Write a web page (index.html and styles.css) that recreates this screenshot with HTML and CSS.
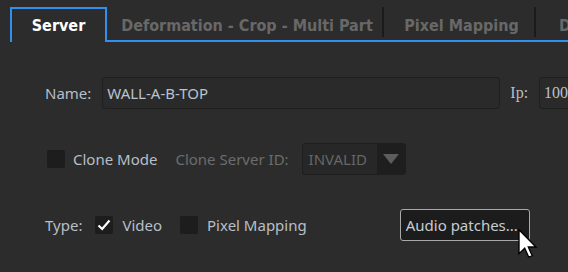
FILE: index.html
```html
<!DOCTYPE html>
<html>
<head>
<meta charset="utf-8">
<link rel="stylesheet" href="styles.css">
</head>
<body>
<div class="page">
  <nav class="tabbar">
    <div class="tab active">Server</div>
    <div class="tab-rest">
      <div class="tab t1">Deformation - Crop - Multi Part</div>
      <div class="sep"></div>
      <div class="tab t2">Pixel Mapping</div>
      <div class="sep"></div>
      <div class="tab t3">Display</div>
    </div>
  </nav>
  <main class="form">
    <div class="row">
      <span class="label">Name:</span>
      <div class="input name-input">WALL-A-B-TOP</div>
      <span class="label serif ip-label">Ip:</span>
      <div class="input ip-input serif">100.100.100.1</div>
    </div>
    <div class="row">
      <span class="check"></span>
      <span class="label clone-label">Clone Mode</span>
      <span class="label dim">Clone Server ID:</span>
      <div class="combo">
        <span class="combo-text">INVALID</span>
        <span class="combo-btn"><svg width="16" height="10" viewBox="0 0 16 10"><path d="M0 0 L16 0 L8 10 Z" fill="#5c5c5c"/></svg></span>
      </div>
    </div>
    <div class="row">
      <span class="label">Type:</span>
      <span class="check checked"><svg width="18" height="18" viewBox="0 0 18 18"><path d="M3.5 9.5 L7.2 13 L14.5 4.5" fill="none" stroke="#ffffff" stroke-width="2.2"/></svg></span>
      <span class="label opt">Video</span>
      <span class="check"></span>
      <span class="label opt">Pixel Mapping</span>
      <div class="button">Audio patches...
        <svg class="cursor" width="20" height="30" viewBox="0 0 13 20"><path d="M0.5 0.5 L0.5 16.5 L4.3 12.8 L7 18.8 L9.3 17.8 L6.7 12 L11.8 12 Z" fill="#ffffff" stroke="#000000" stroke-width="0.9" stroke-linejoin="miter"/></svg>
      </div>
    </div>
  </main>
</div>
</body>
</html>
```

FILE: styles.css
```css
html, body {
  margin: 0;
  padding: 0;
  background: #2c2c2c;
  overflow: hidden;
}
.page {
  width: 568px;
  height: 272px;
  overflow: hidden;
  font-family: "Noto Sans", "Open Sans", sans-serif;
}
.tabbar {
  display: flex;
  padding: 7px 0 0 10px;
  font-family: "DejaVu Sans Condensed", "DejaVu Sans", sans-serif;
  font-weight: bold;
  font-size: 16px;
  line-height: 19px;
  white-space: nowrap;
}
.tab {
  color: #686868;
  text-align: center;
  box-sizing: border-box;
}
.tab.active {
  color: #ffffff;
  width: 97px;
  height: 35px;
  border: 2px solid #3190ee;
  border-bottom: none;
  display: flex;
  align-items: center;
  justify-content: center;
}
.tab-rest {
  flex: 1;
  display: flex;
  height: 33px;
  border-bottom: 2px solid #3190ee;
  overflow: hidden;
}
.tab-rest .tab {
  height: 33px;
  padding-top: 9px;
  padding-left: 5px;
  flex: none;
}
.t1 { width: 275px; }
.t2 { width: 150px; }
.t3 { width: 60px; text-align: left; padding-left: 23px !important; }
.sep {
  width: 2px;
  height: 30px;
  background: #1b1b1b;
  flex: none;
}
.form {
  display: flex;
  flex-direction: column;
  gap: 34px;
  padding: 35px 0 0 45px;
}
.row {
  display: flex;
  align-items: center;
  height: 32px;
  white-space: nowrap;
}
.label {
  color: #b8bfc7;
  font-size: 15px;
}
.serif {
  font-family: "Liberation Serif", serif;
  font-size: 16px;
}
.dim {
  color: #6c6c6c;
  margin-left: 18px;
}
.input {
  box-sizing: border-box;
  height: 32px;
  border: 1px solid #1f1f1f;
  border-radius: 3px;
  background: #2a2a2a;
  color: #b8c3cf;
  font-size: 15px;
  display: flex;
  align-items: center;
  padding-left: 4px;
  flex: none;
}
.name-input {
  width: 398px;
  margin-left: 11px;
}
.ip-label {
  margin-left: 10px;
}
.ip-input {
  width: 120px;
  margin-left: 11px;
  font-size: 16px;
  color: #b8c3cf;
}
.check {
  width: 18px;
  height: 18px;
  background: #1d1d1d;
  border-radius: 2px;
  flex: none;
  display: block;
}
.check svg { display: block; }
.row .check:first-child { margin-left: 2px; }
.clone-label { margin-left: 8px; }
.label + .check { margin-left: 13px; }
.opt { margin-left: 9px; }
.opt + .check { margin-left: 18px; }
.combo {
  display: flex;
  height: 32px;
  box-sizing: border-box;
  width: 104px;
  margin-left: 13px;
  border: 1px solid #1e1e1e;
  border-radius: 3px;
  background: #272727;
  overflow: hidden;
}
.combo-text {
  flex: 1;
  color: #666666;
  font-size: 15px;
  display: flex;
  align-items: center;
  padding-left: 6px;
}
.combo-btn {
  width: 28px;
  background: #1e1e1e;
  display: flex;
  align-items: center;
  justify-content: center;
}
.button {
  position: relative;
  box-sizing: border-box;
  height: 32px;
  width: 130px;
  margin-left: 93px;
  border: 1px solid #a9a9a9;
  border-radius: 3px;
  background: #1c1c1c;
  color: #c6ccd3;
  font-size: 15px;
  display: flex;
  align-items: center;
  padding-left: 5px;
}
.cursor {
  position: absolute;
  left: 117px;
  top: 19px;
}
```
